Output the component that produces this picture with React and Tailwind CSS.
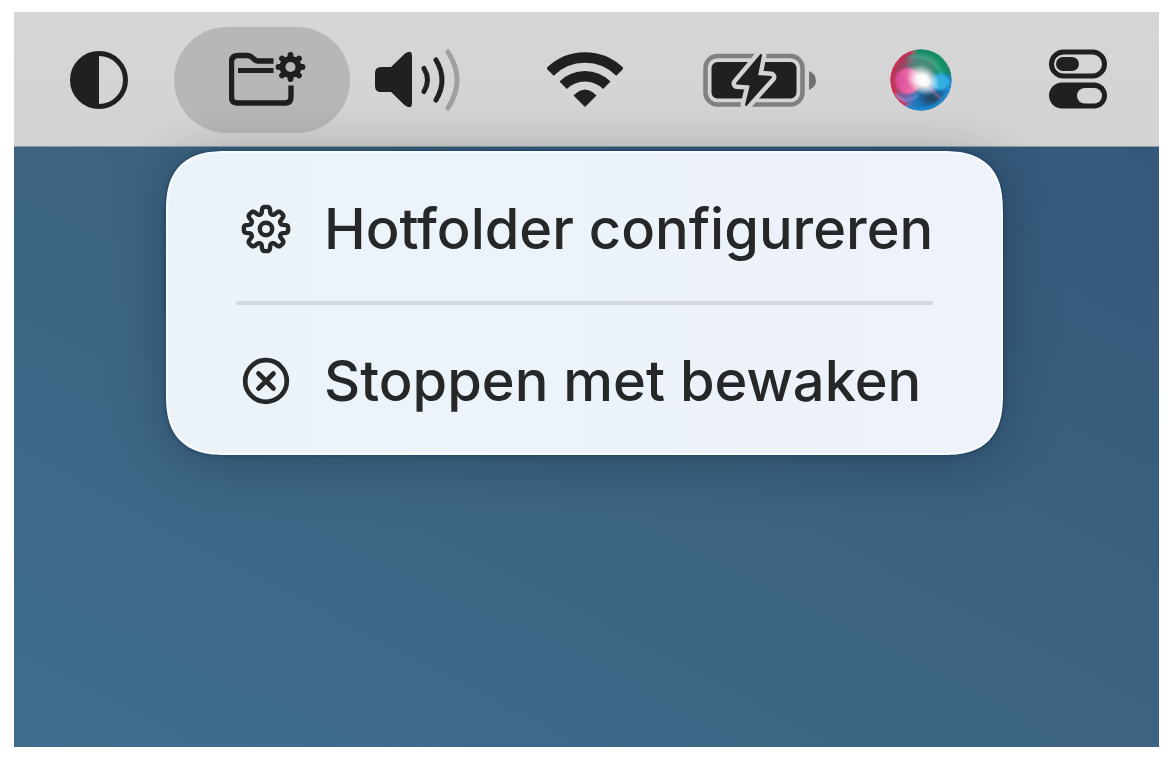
import React from 'react'

// outline of an eight-tooth cog, centred on 0,0
function cogPath(radius, depth) {
    const points = [];
    for (let i = 0; i < 160; i++) {
        const angle = (i / 160) * Math.PI * 2;
        const r = radius + depth * Math.tanh(2.2 * Math.cos(8 * angle) + 0.4);
        points.push(`${(r * Math.sin(angle)).toFixed(2)} ${(-r * Math.cos(angle)).toFixed(2)}`);
    }
    return `M${points.join('L')}Z`;
}

function ContrastIcon() {
    return (
        <svg width="58" height="58" viewBox="0 0 58 58" fill="none">
            <circle cx="29" cy="29" r="26.5" stroke="#202020" strokeWidth="5" />
            <path d="M29 1A28 28 0 0 0 29 57Z" fill="#202020" />
        </svg>
    )
}

function FolderGearIcon() {
    return (
        <svg width="78" height="58" viewBox="229 52 78 58" fill="none" stroke="#1f1f1f">
            <path d="M273.500 62H257.500Q256 62 254.500 60.500L251.500 58Q249.500 56.500 247 56.500H238Q231.500 56.500 231.500 63V98Q231.500 104 237.500 104H285Q291 104 291 98V86.500" strokeWidth="5.400" />
            <path d="M238 71.500H273.500" strokeWidth="5" />
            <circle cx="290.500" cy="68" r="8" strokeWidth="6" />
            {[0, 45, 90, 135, 180, 225, 270, 315].map((deg) => (
                <path key={deg} d="M290.500 59V56" strokeWidth="5.800" strokeLinecap="round" transform={`rotate(${deg} 290.500 68)`} />
            ))}
        </svg>
    )
}

function VolumeIcon() {
    return (
        <svg width="86" height="62" viewBox="375 50 86 62" fill="none" strokeWidth="5" strokeLinecap="round">
            <path d="M381 68H391L405 54.500Q412 50 412 57V104Q412 111 405 106.500L391 93H381Q375 93 375 87V74Q375 68 381 68Z" fill="#202020" />
            <path d="M424 69.500Q431 81 424 92.500" stroke="#202020" />
            <path d="M436 61Q448 81 436 101" stroke="#202020" />
            <path d="M448 53Q466 81 448 109" stroke="#a0a0a0" />
        </svg>
    )
}

function WifiIcon() {
    return (
        <svg width="76" height="58" viewBox="547 51 76 58" fill="none" stroke="#202020" strokeWidth="10.500">
            <path d="M550 72A49.500 49.500 0 0 1 620 72" />
            <path d="M563.200 85.200A30.800 30.800 0 0 1 606.800 85.200" />
            <path d="M585 106.500L574 95.500Q585 84.500 596 95.500Z" fill="#202020" strokeWidth="1" strokeLinejoin="round" />
        </svg>
    )
}

function BatteryIcon() {
    const bolt = 'M762 55L738 83.500L752 84.500L747 105L772 77L758 76Z';
    return (
        <svg width="114" height="58" viewBox="704 51 114 58">
            <rect x="706.500" y="56" width="97" height="48.500" rx="12" fill="none" stroke="#808080" strokeWidth="4.500" />
            <rect x="712.500" y="62" width="85" height="36.500" rx="6" fill="#202020" />
            <path d="M810 71Q817 74 817 80.500Q817 87 810 90Z" fill="#707070" />
            <path d={bolt} fill="#d3d3d3" stroke="#d3d3d3" strokeWidth="11" strokeLinejoin="round" />
            <path d={bolt} fill="#202020" stroke="#202020" strokeWidth="2" strokeLinejoin="round" />
        </svg>
    )
}

function SiriIcon() {
    return (
        <svg width="62" height="62" viewBox="0 0 62 62">
            <defs>
                <clipPath id="siri-ball"><circle cx="31" cy="31" r="30.500" /></clipPath>
                <filter id="siri-soft" x="-50%" y="-50%" width="200%" height="200%"><feGaussianBlur stdDeviation="3" /></filter>
                <filter id="siri-edge" x="-20%" y="-20%" width="140%" height="140%"><feGaussianBlur stdDeviation="0.800" /></filter>
                <radialGradient id="siri-glow">
                    <stop offset="0" stopColor="#fff" />
                    <stop offset="0.350" stopColor="#fff" stopOpacity="0.950" />
                    <stop offset="1" stopColor="#fff" stopOpacity="0" />
                </radialGradient>
                <linearGradient id="siri-pink" x1="0" y1="0" x2="1" y2="0">
                    <stop offset="0" stopColor="#dc4596" />
                    <stop offset="1" stopColor="#f08ab5" />
                </linearGradient>
            </defs>
            <g clipPath="url(#siri-ball)">
                <rect width="62" height="62" fill="#5d7586" />
                <g filter="url(#siri-soft)">
                    <path d="M-5 -5H24L14 31L30 67H-5Z" fill="#a03f5c" />
                    <path d="M22 -5H67V27L45 28L31 16Z" fill="#159a72" />
                    <path d="M67 26V67H18L17 44L36 40L48 26Z" fill="#1e78bd" />
                    <ellipse cx="42" cy="49" rx="12" ry="7" fill="#234a68" />
                    <ellipse cx="33" cy="16" rx="12" ry="8" fill="#4b8a7c" />
                    <ellipse cx="15" cy="49" rx="6" ry="9" fill="#7a61a8" />
                </g>
                <g filter="url(#siri-edge)">
                    <path d="M24 1Q5 6 1.500 28Q1 48 18 58" fill="none" stroke="#e3264f" strokeWidth="3" />
                    <path d="M24 2Q48 -1 60 26" fill="none" stroke="#15855f" strokeWidth="3" />
                    <path d="M61 30Q58 53 38 60Q25 62 16 57" fill="none" stroke="#248fd8" strokeWidth="3" />
                    <path d="M19 9Q40 3 52 25" fill="none" stroke="#50b092" strokeWidth="1.500" />
                    <circle cx="18" cy="32" r="13" fill="url(#siri-pink)" />
                    <ellipse cx="50" cy="33" rx="9" ry="8" fill="#32aee0" />
                    <path d="M6 45Q15 57 28 46" fill="none" stroke="#8f9adf" strokeWidth="1.500" />
                    <path d="M34 34L50 49" stroke="#c56b98" strokeWidth="1.500" />
                </g>
                <ellipse cx="33" cy="31" rx="18" ry="14" fill="url(#siri-glow)" transform="rotate(35 33 31)" />
            </g>
        </svg>
    )
}

function ControlCenterIcon() {
    return (
        <svg width="58" height="62" viewBox="1049 49 58 62">
            <rect x="1051.500" y="52" width="53" height="24" rx="12" fill="none" stroke="#202020" strokeWidth="5" />
            <rect x="1056" y="57" width="23" height="14" rx="7" fill="#202020" />
            <rect x="1049" y="82.500" width="58" height="26" rx="13" fill="#202020" />
            <rect x="1077" y="88" width="25" height="15.500" rx="7.750" fill="#d5d5d5" />
        </svg>
    )
}

function GearIcon() {
    return (
        <svg width="50" height="50" viewBox="-25 -25 50 50" fill="none" stroke="#252728" strokeWidth="4.400" strokeLinejoin="round">
            <path d={cogPath(18.8, 3.4)} />
            <circle r="6.200" />
        </svg>
    )
}

function StopIcon() {
    return (
        <svg width="48" height="48" viewBox="-24 -24 48 48" fill="none" stroke="#252728" strokeWidth="4.700" strokeLinecap="round">
            <circle r="20.800" />
            <path d="M-7.500 -7.500L7.500 7.500M7.500 -7.500L-7.500 7.500" />
        </svg>
    )
}

function MenuItem({ icon, label }) {
    return (
        <button role="menuitem" className="flex w-full items-center gap-7 pt-9 pb-8 text-left text-[56px] leading-[80px] font-medium whitespace-nowrap text-[#252728]">
            <span className="flex w-[60px] shrink-0 justify-center">{icon}</span>
            {label}
        </button>
    )
}

function App() {
    return (
        <div className="flex min-h-screen flex-col bg-white pt-3 pr-[15px] pb-[15px] pl-3.5 font-['Inter',sans-serif]">
            <header className="flex h-[135px] items-center border-b border-[#8b9ba5] bg-linear-to-b from-[#d6d6d6] to-[#d3d3d3] pt-0.5 pr-[52px] pl-14">
                <button aria-label="Contrast"><ContrastIcon /></button>
                <button aria-label="Hotfolder" aria-expanded="true" className="ml-[46px] flex h-[106px] w-44 items-center justify-center rounded-full bg-[#b7b7b7] pl-3">
                    <FolderGearIcon />
                </button>
                <button aria-label="Volume" className="ml-[25px]"><VolumeIcon /></button>
                <button aria-label="Wi-Fi" className="ml-[86px]"><WifiIcon /></button>
                <button aria-label="Battery" className="ml-20"><BatteryIcon /></button>
                <button aria-label="Siri" className="ml-[73px]"><SiriIcon /></button>
                <button aria-label="Control Center" className="ml-auto"><ControlCenterIcon /></button>
            </header>
            <main className="flex flex-1 items-start bg-linear-to-tr from-[#406d8d] via-[#3c6482] to-[#34587a] pt-1 pl-[152px]">
                <div role="menu" className="rounded-[62px] [corner-shape:superellipse(1.4)] border-2 border-[#f8fcff] bg-linear-to-r from-[#ebf3f9] to-[#eef2fa] px-[68px] shadow-[0_8px_56px_rgba(0,20,35,0.300),0_0_4px_rgba(0,20,35,0.400)]">
                    <MenuItem icon={<GearIcon />} label="Hotfolder configureren" />
                    <hr className="border-t-4 border-[#d5dadf]" />
                    <MenuItem icon={<StopIcon />} label="Stoppen met bewaken" />
                </div>
            </main>
        </div>
    )
}

export default App
